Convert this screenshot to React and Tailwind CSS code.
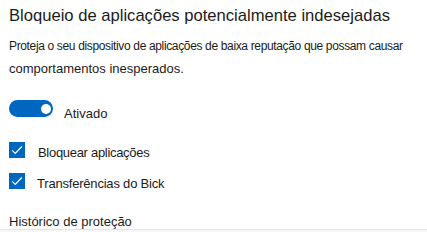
export default function App() {
  return (
    <div className="h-[232px] w-[427px] overflow-hidden bg-white text-[#1b1b1b]" style={{ fontFamily: '"Liberation Sans", Arial, sans-serif' }}>
      <div className="px-[9px] pt-[5px]">
        <h1 className="text-[16.6px] leading-[22px]">Bloqueio de aplicações potencialmente indesejadas</h1>
        <p className="mt-[7px] text-[12px] leading-[24px] tracking-[-0.35px] whitespace-nowrap">
          Proteja o seu dispositivo de aplicações de baixa reputação que possam causar
        </p>
        <p className="text-[13px] leading-[22px]">comportamentos inesperados.</p>

        <div className="mt-[20px] flex items-start gap-[11px]">
          <button className="relative flex h-[17px] w-[44px] items-center rounded-full bg-[#0067c0]">
            <span className="absolute left-[32px] h-[10px] w-[10px] rounded-full bg-white" />
          </button>
          <span className="mt-[6px] text-[13px] leading-[16px]">Ativado</span>
        </div>

        <div className="mt-[20px] flex flex-col gap-[15px]">
          <label className="flex items-end gap-[13px]">
            <span className="flex h-[16px] w-[16px] items-center justify-center bg-[#0067c0]">
              <svg viewBox="0 0 16 16" className="h-[14px] w-[14px]" fill="none" stroke="white" strokeWidth="1.3">
                <path d="M2.5 8.5 L6 12 L13.5 4" />
              </svg>
            </span>
            <span className="translate-y-[3px] text-[13px] leading-[16px] tracking-[-0.3px]">Bloquear aplicações</span>
          </label>
          <label className="flex items-end gap-[12px]">
            <span className="flex h-[16px] w-[16px] items-center justify-center bg-[#0067c0]">
              <svg viewBox="0 0 16 16" className="h-[14px] w-[14px]" fill="none" stroke="white" strokeWidth="1.3">
                <path d="M2.5 8.5 L6 12 L13.5 4" />
              </svg>
            </span>
            <span className="translate-y-[3px] text-[13px] leading-[16px] tracking-[-0.2px]">Transferências do Bick</span>
          </label>
        </div>

        <p className="mt-[25px] text-[13px] leading-[16px]">Histórico de proteção</p>
      </div>
      <div className="-mt-[1px] h-px bg-[#e5e5e5]" />
      <div className="h-[10px] bg-[#f7f7f7]" />
    </div>
  );
}
